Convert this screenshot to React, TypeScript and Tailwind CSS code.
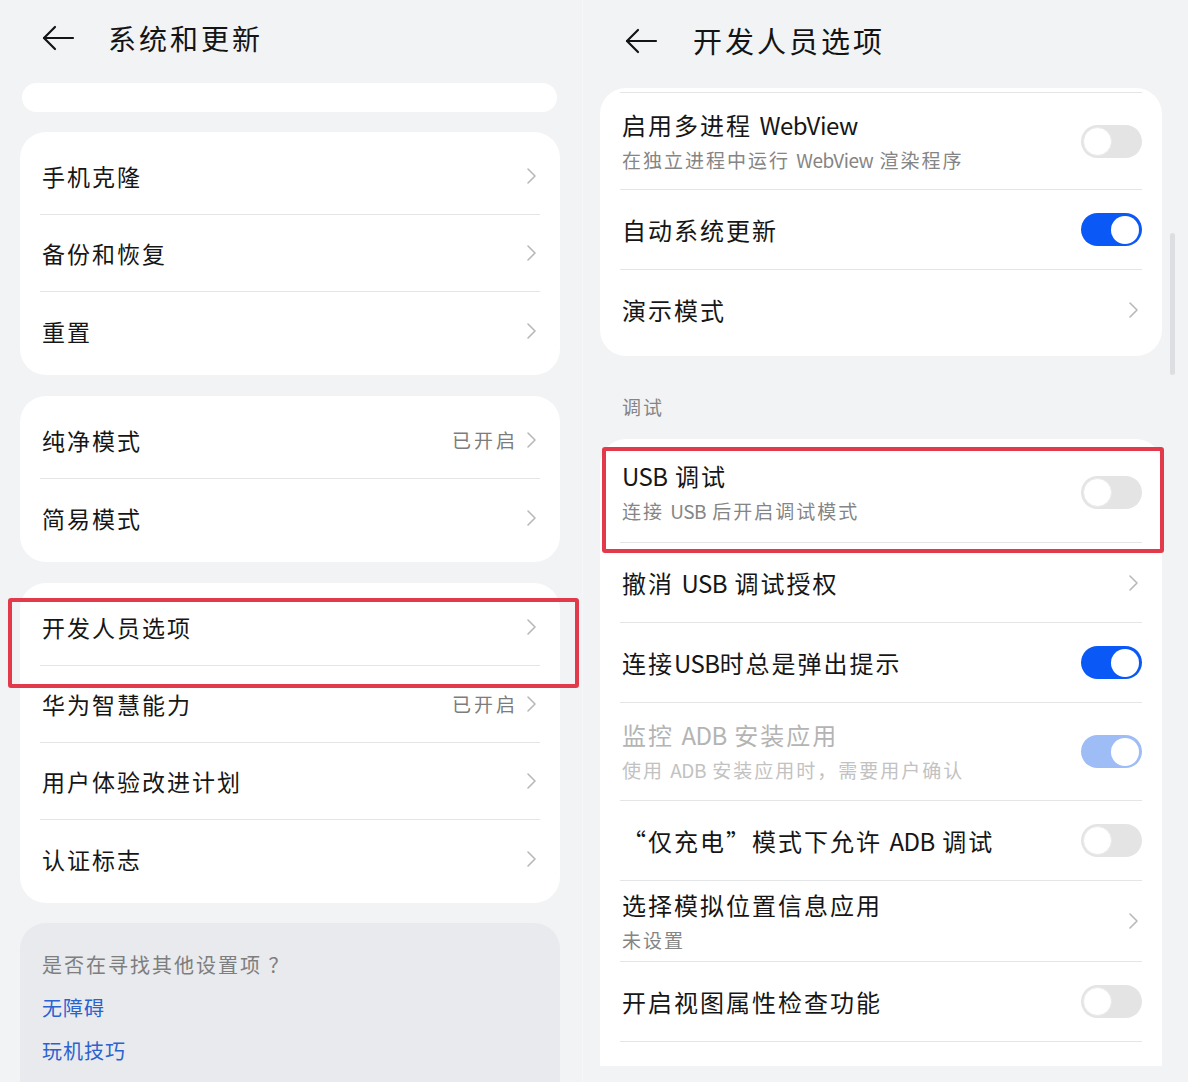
import React from 'react';

const font = "font-['Noto_Sans_CJK_SC','Noto_Sans',sans-serif]";

function Txt({ children }: { children: string }) {
  const parts = children.split(/([A-Za-z]+)/);
  return (
    <>
      {parts.map((p, i) =>
        /^[A-Za-z]+$/.test(p) ? (
          <span key={i} className="tracking-[-0.5px]">{p}</span>
        ) : (
          <React.Fragment key={i}>{p}</React.Fragment>
        )
      )}
    </>
  );
}

function BackArrow() {
  return (
    <svg viewBox="0 0 33 26" className="w-[33px] h-[26px]" fill="none" stroke="#141414" strokeWidth="2.2" strokeLinecap="round" strokeLinejoin="round">
      <path d="M31 13H2" />
      <path d="M13 2L2 13l11 11" />
    </svg>
  );
}

function Chevron() {
  return (
    <svg viewBox="0 0 11 18" className="w-[11px] h-[18px] shrink-0" fill="none" stroke="#b8b8b8" strokeWidth="1.6" strokeLinecap="round" strokeLinejoin="round">
      <path d="M2 2l7 7-7 7" />
    </svg>
  );
}

function Toggle({ on = false, disabled = false }: { on?: boolean; disabled?: boolean }) {
  if (on) {
    return (
      <div className={`w-[61px] h-[33px] rounded-full flex items-center justify-end px-[3px] shrink-0 ${disabled ? 'bg-[#9ebcf6]' : 'bg-[#0a59f7]'}`}>
        <div className="w-[28px] h-[28px] rounded-full bg-white" />
      </div>
    );
  }
  return (
    <div className="w-[61px] h-[33px] rounded-full bg-[#e4e4e4] flex items-center px-[2px] shrink-0">
      <div className="w-[29px] h-[29px] rounded-full bg-white border border-[#e9e9e9]" />
    </div>
  );
}

interface LeftRow {
  label: string;
  value?: string;
}

function LeftCard({ rows }: { rows: LeftRow[] }) {
  return (
    <div className="bg-white rounded-[26px] px-5 py-[6px] w-[540px]">
      {rows.map((r, i) => (
        <div
          key={r.label}
          className={`h-[77px] flex items-center pl-[2px] pr-[3px] ${i < rows.length - 1 ? 'border-b border-[#e4e5e7]' : ''}`}
        >
          <span className="flex-1 text-[23px] tracking-[2px] text-[#161616] leading-[30px]">{r.label}</span>
          {r.value && <span className="text-[19px] tracking-[3px] text-[#7c7c7c] mr-[8px]">{r.value}</span>}
          <Chevron />
        </div>
      ))}
    </div>
  );
}

type RightRow = {
  title: string;
  sub?: string;
  kind: 'toggle' | 'chevron';
  on?: boolean;
  disabled?: boolean;
  h: string;
};

const devRowsTop: RightRow[] = [
  { title: '启用多进程 WebView', sub: '在独立进程中运行 WebView 渲染程序', kind: 'toggle', h: 'h-[97px]' },
  { title: '自动系统更新', kind: 'toggle', on: true, h: 'h-[80px]' },
  { title: '演示模式', kind: 'chevron', h: 'h-[80px]' },
];

const debugRows: RightRow[] = [
  { title: 'USB 调试', sub: '连接 USB 后开启调试模式', kind: 'toggle', h: 'h-[100px]' },
  { title: '撤消 USB 调试授权', kind: 'chevron', h: 'h-[80px]' },
  { title: '连接USB时总是弹出提示', kind: 'toggle', on: true, h: 'h-[80px]' },
  { title: '监控 ADB 安装应用', sub: '使用 ADB 安装应用时，需要用户确认', kind: 'toggle', on: true, disabled: true, h: 'h-[98px]' },
  { title: '“仅充电”模式下允许 ADB 调试', kind: 'toggle', h: 'h-[80px]' },
  { title: '选择模拟位置信息应用', sub: '未设置', kind: 'chevron', h: 'h-[81px]' },
  { title: '开启视图属性检查功能', kind: 'toggle', h: 'h-[80px]' },
];

function RightRows({ rows, lastBorder }: { rows: RightRow[]; lastBorder: boolean }) {
  return (
    <>
      {rows.map((r, i) => (
        <div
          key={r.title}
          className={`${r.h} flex items-center ${i < rows.length - 1 || lastBorder ? 'border-b border-[#e4e5e7]' : ''}`}
        >
          <div className="flex-1 flex flex-col gap-[7px] pl-[2px]">
            <span className={`text-[24px] tracking-[2px] leading-[30px] ${r.disabled ? 'text-[#b4b4b4]' : 'text-[#161616]'}`}>
              <Txt>{r.title}</Txt>
            </span>
            {r.sub && (
              <span className={`text-[19px] tracking-[2px] leading-[26px] ${r.disabled ? 'text-[#c2c2c2]' : 'text-[#858585]'}`}>
                <Txt>{r.sub}</Txt>
              </span>
            )}
          </div>
          {r.kind === 'toggle' ? <Toggle on={r.on} disabled={r.disabled} /> : <div className="mr-[3px]"><Chevron /></div>}
        </div>
      ))}
    </>
  );
}

export default function App() {
  return (
    <div className={`relative w-[1188px] h-[1082px] overflow-hidden bg-[#f1f3f5] flex ${font}`}>
      {/* left screen: 系统和更新 */}
      <div className="w-[583px] shrink-0 pl-5 border-r border-[#f6f7f8]">
        <header className="h-[76px] flex items-center pl-[22px] gap-[33px]">
          <BackArrow />
          <h1 className="text-[28px] tracking-[3px] text-[#141414] font-normal">系统和更新</h1>
        </header>
        <div className="mt-[7px] ml-[2px] w-[535px] h-[29px] rounded-full bg-white" />
        <div className="mt-[20px] flex flex-col gap-[21px]">
          <LeftCard rows={[{ label: '手机克隆' }, { label: '备份和恢复' }, { label: '重置' }]} />
          <LeftCard rows={[{ label: '纯净模式', value: '已开启' }, { label: '简易模式' }]} />
          <LeftCard
            rows={[
              { label: '开发人员选项' },
              { label: '华为智慧能力', value: '已开启' },
              { label: '用户体验改进计划' },
              { label: '认证标志' },
            ]}
          />
          <div className="bg-[#e8eaed] rounded-[26px] w-[540px] h-[200px] pt-[20px] pl-[22px] -mt-px">
            <div className="h-[43px] flex items-center text-[20px] tracking-[2px] text-[#7e7e7e]">是否在寻找其他设置项 ？</div>
            <div className="h-[43px] flex items-center text-[20px] tracking-[1px] text-[#2a62cf]">无障碍</div>
            <div className="h-[43px] flex items-center text-[20px] tracking-[1px] text-[#2a62cf]">玩机技巧</div>
          </div>
        </div>
      </div>

      {/* right screen: 开发人员选项 */}
      <div className="relative flex-1">
        <header className="h-[82px] flex items-center pl-[42px] gap-[35px]">
          <BackArrow />
          <h1 className="text-[29px] tracking-[3px] text-[#141414] font-normal">开发人员选项</h1>
        </header>
        <div className="mt-[6px] ml-[17px] w-[562px] bg-white rounded-[26px] px-5 pb-[6px]">
          <div className="h-[5px] border-b border-[#e4e5e7]" />
          <RightRows rows={devRowsTop} lastBorder={false} />
        </div>
        <div className="h-[83px] flex items-end pb-[22px] pl-[39px]">
          <span className="text-[19px] tracking-[2px] leading-[20px] text-[#858585]">调试</span>
        </div>
        <div className="ml-[17px] w-[562px] bg-white rounded-t-[26px] px-5 pt-[4px] pb-[24px]">
          <RightRows rows={debugRows} lastBorder={true} />
        </div>
        <div className="absolute left-[587px] top-[233px] w-[5px] h-[142px] rounded-full bg-[#dcdee1]" />
      </div>

      {/* highlight boxes */}
      <div className="absolute left-[8px] top-[598px] w-[571px] h-[90px] border-4 border-[#e23a4b] rounded-[3px]" />
      <div className="absolute left-[602px] top-[447px] w-[562px] h-[106px] border-4 border-[#e23a4b] rounded-[3px]" />
    </div>
  );
}
